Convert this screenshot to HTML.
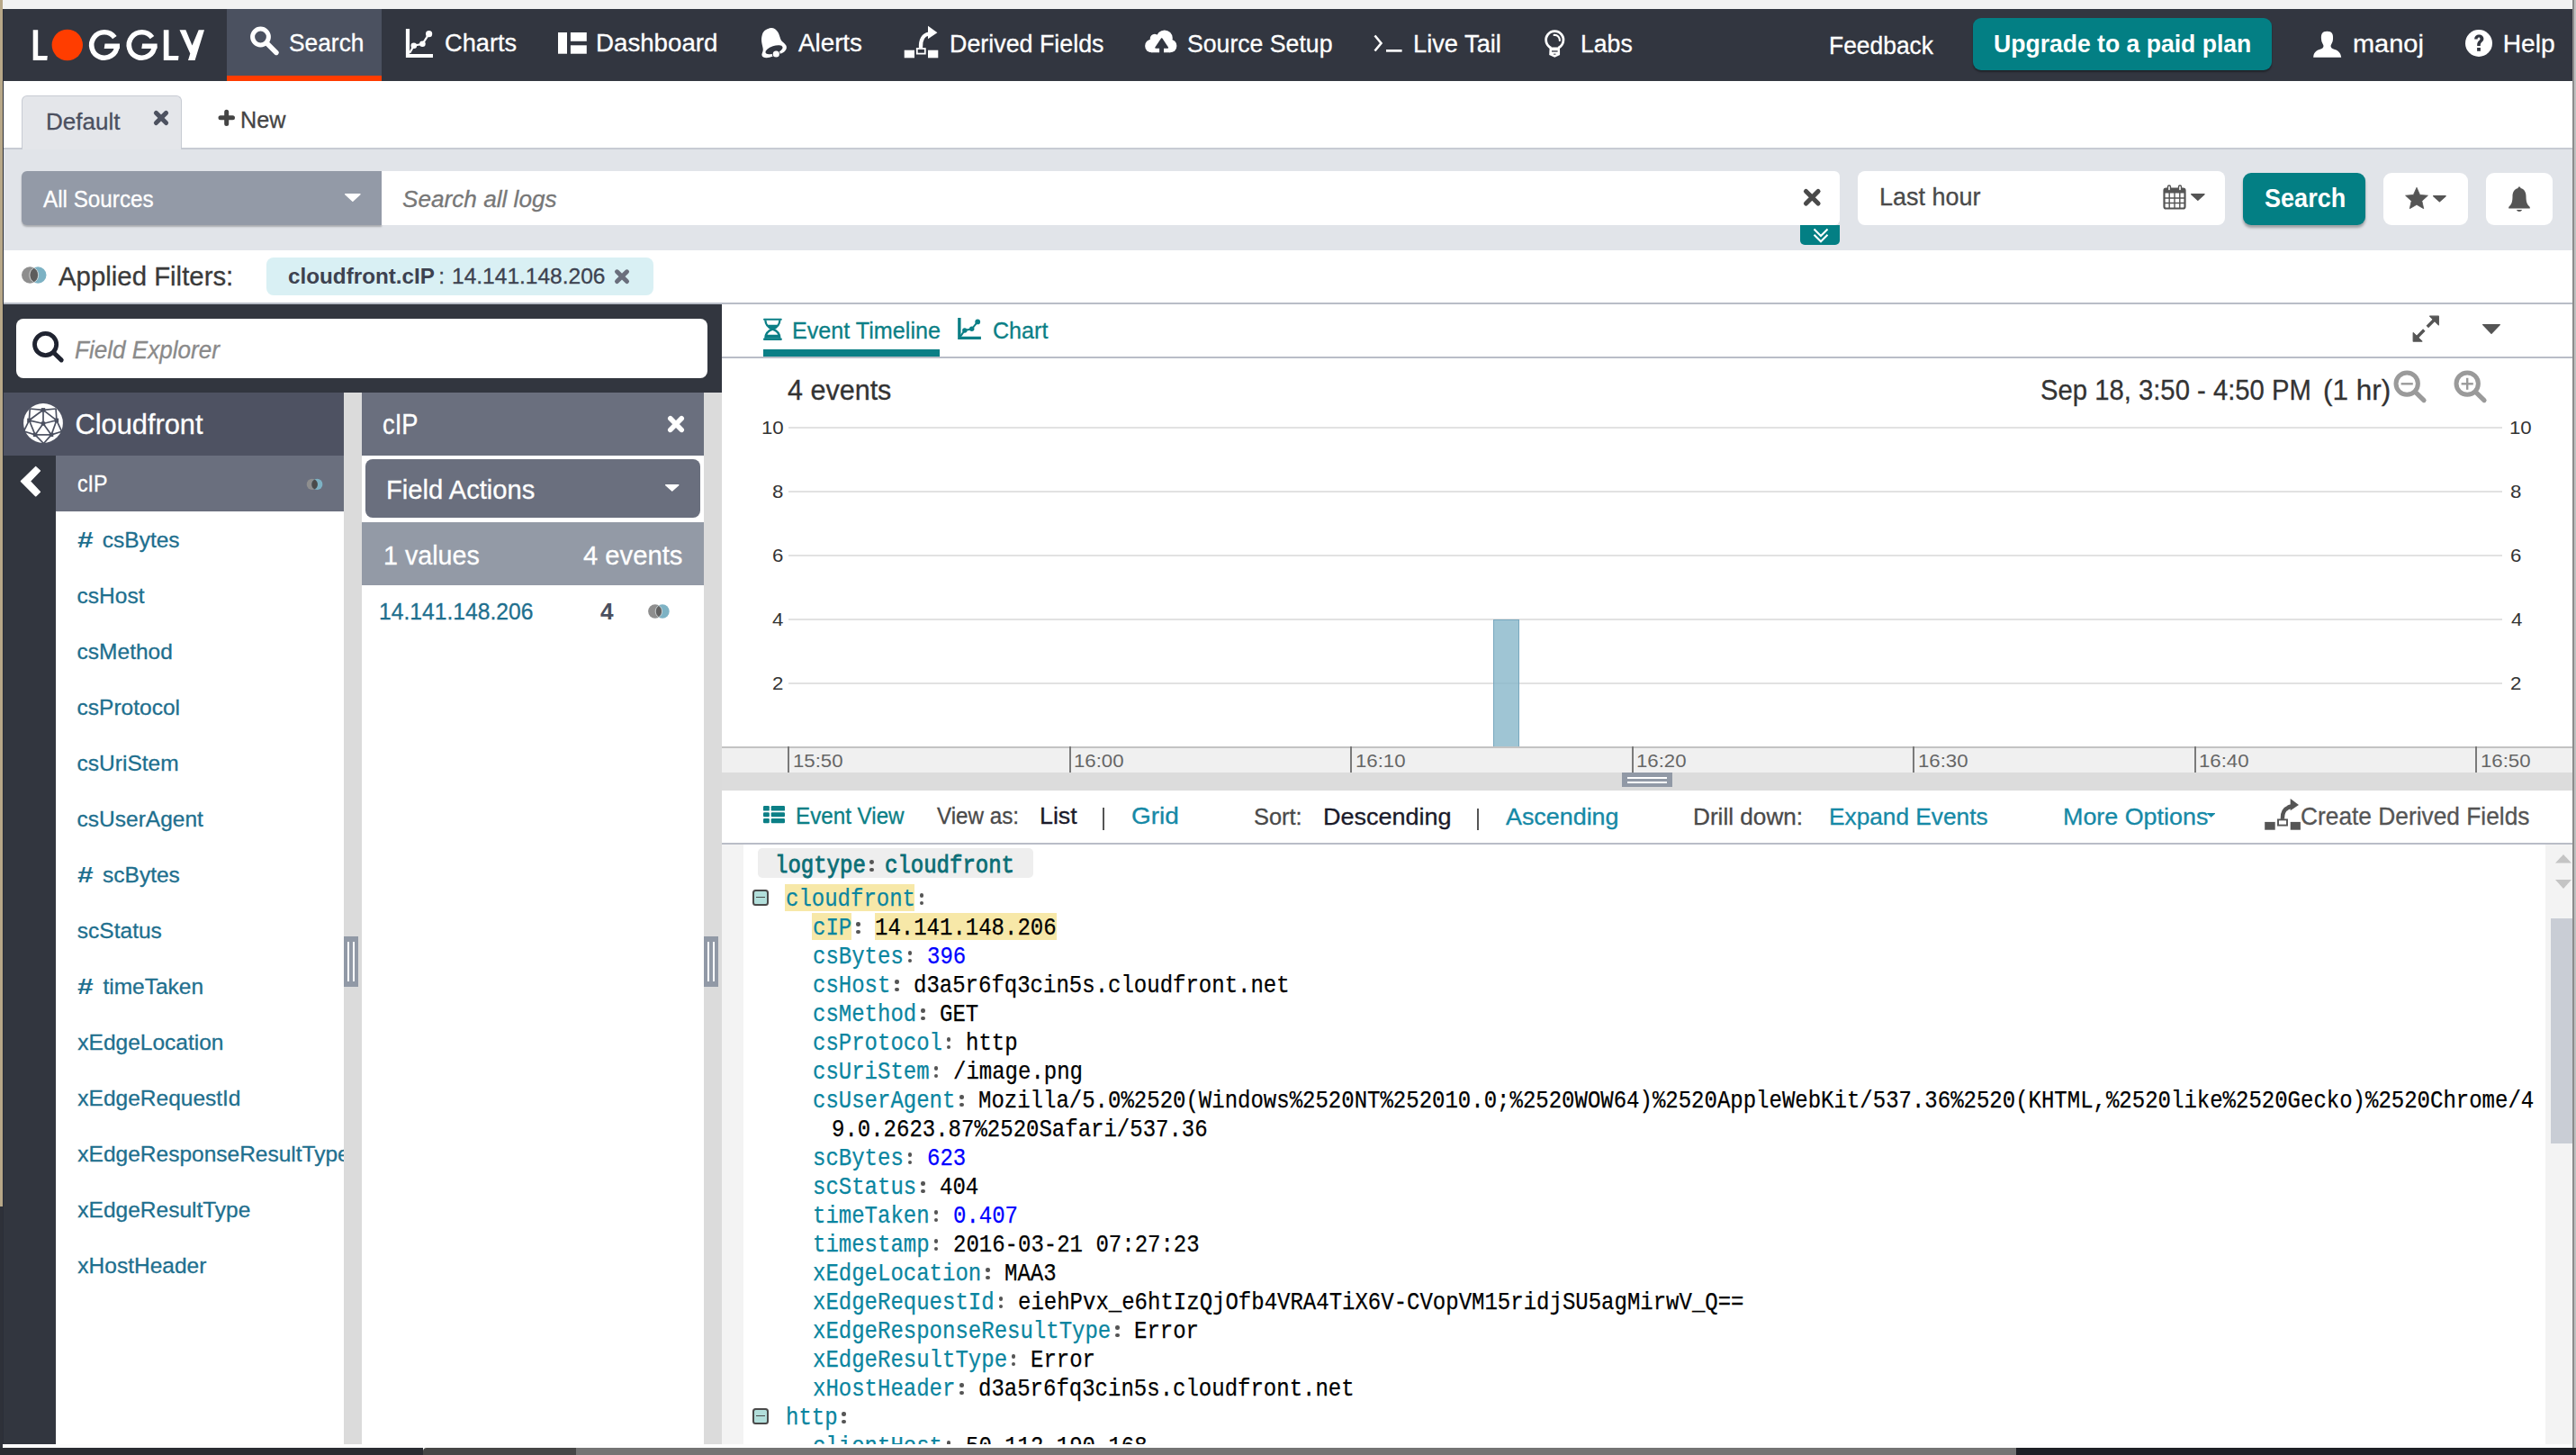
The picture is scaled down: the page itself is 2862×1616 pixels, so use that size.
<!DOCTYPE html><html><head><meta charset="utf-8"><title>Loggly</title><style>*{margin:0;padding:0;box-sizing:border-box}
html,body{width:2862px;height:1616px;overflow:hidden;background:#fff}
body{position:relative;font-family:'Liberation Sans',sans-serif}
div{position:absolute}
.t{white-space:pre;-webkit-text-stroke-width:0.3px}
</style></head><body>
<div style="left:0.00px;top:0.00px;width:2862.00px;height:1616.00px;background:#ffffff;"></div>
<div style="left:0.00px;top:0.00px;width:2862.00px;height:10.00px;background:#f2f2f2;"></div>
<div style="left:0.00px;top:10.00px;width:2858.00px;height:80.00px;background:#323640;"></div>
<div style="left:252.00px;top:10.00px;width:172.00px;height:80.00px;background:#4b5160;"></div>
<div style="left:252.00px;top:84.00px;width:172.00px;height:6.00px;background:#ff3c00;"></div>
<svg style="position:absolute;left:30px;top:25px;" width="210" height="50" viewBox="0 0 210 50"><g fill="#fff"><polygon points="6.7,8.2 12.2,8.2 12.2,37.1 22.8,37.1 22.3,42 6.7,42"/><circle cx="44.8" cy="25" r="17.2" fill="#ff3d00"/><polygon points="151.8,8.2 157.5,8.2 157.5,37.1 168.5,37.1 168,42 151.8,42"/><polygon points="169.5,8.2 176.4,8.2 183.5,25.5 190.7,8.2 197,8.2 186.6,42 179,42 181.3,34.5"/></g><path d="M 97.39 16.65 A 14.2 14.2 0 1 0 100.07 25.99" fill="none" stroke="#fff" stroke-width="5.6"/><polygon points="86.50,23.6 103.00,23.6 103.00,29 85.70,29" fill="#fff"/><path d="M 138.99 16.65 A 14.2 14.2 0 1 0 141.67 25.99" fill="none" stroke="#fff" stroke-width="5.6"/><polygon points="128.10,23.6 144.60,23.6 144.60,29 127.30,29" fill="#fff"/></svg>
<svg style="position:absolute;left:270px;top:24px;" width="46" height="46" viewBox="0 0 46 46"><circle cx="19.5" cy="17" r="8.9" fill="none" stroke="#fff" stroke-width="5"/><line x1="26.5" y1="24" x2="37" y2="34.5" stroke="#fff" stroke-width="5.4" stroke-linecap="round"/></svg>
<svg style="position:absolute;left:448px;top:28px;" width="40" height="40" viewBox="0 0 40 40"><path d="M5,4 V34 H33" fill="none" stroke="#fff" stroke-width="4.2"/><polyline points="7.2,30.7 11.8,22.7 21.4,20.8 28.6,9.7" fill="none" stroke="#fff" stroke-width="2.3"/><circle cx="11.8" cy="22.7" r="3.3" fill="#fff"/><circle cx="21.4" cy="20.8" r="3.3" fill="#fff"/><circle cx="28.6" cy="9.7" r="3.6" fill="#fff"/></svg>
<svg style="position:absolute;left:618px;top:34px;" width="40" height="30" viewBox="0 0 40 30"><rect x="2" y="2" width="10" height="23.7" fill="#fff"/><rect x="15.9" y="2" width="17.9" height="9.8" fill="#fff"/><rect x="15.9" y="16.3" width="17.9" height="9.4" fill="#fff"/></svg>
<svg style="position:absolute;left:840px;top:25px;" width="40" height="45" viewBox="0 0 40 45"><path d="M13.3,7.1 C 17,4.5 22,6.5 24.5,11 C 27,15.5 26.5,19 29.5,21.5 C 33,24.5 34.5,26 33.7,29 C 32.5,32.5 29,34 27.5,34.5 L 15,38.7 C 11,39.8 7,39 6.5,36.5 C 6,34 8.5,32.5 7.5,28 C 6.5,23 5,19 7,13 C 8.5,9 11,8 13.3,7.1 Z" fill="#fff"/><ellipse cx="20" cy="30.3" rx="10" ry="4.2" transform="rotate(-18 20 30.3)" fill="#323640"/><circle cx="22.3" cy="35" r="4.5" fill="#323640"/><circle cx="22.3" cy="35" r="3.6" fill="#fff"/></svg>
<svg style="position:absolute;left:1000px;top:25px;" width="48" height="44" viewBox="0 0 48 44"><rect x="4.7" y="30.7" width="11.3" height="8.6" fill="#fff"/><rect x="31" y="30.7" width="11.3" height="8.6" fill="#fff"/><rect x="18.8" y="29" width="9" height="5.6" fill="none" stroke="#fff" stroke-width="1.8"/><path d="M23,28 C 22.5,19 26,13.5 32,12.5" fill="none" stroke="#fff" stroke-width="4.2"/><polygon points="31,3.8 41.4,11.2 31,18.2" fill="#fff"/></svg>
<svg style="position:absolute;left:1268px;top:28px;" width="44" height="36" viewBox="0 0 44 36"><g fill="#fff"><circle cx="14.9" cy="14.9" r="5.2"/><circle cx="25.8" cy="14.4" r="9"/><circle cx="11.4" cy="23" r="7.3"/><circle cx="32.1" cy="23" r="7.3"/><rect x="11.4" y="15" width="20.7" height="15.3"/></g><polygon points="22.7,15 16,24.9 29.3,24.9" fill="#323640" stroke="#323640" stroke-width="1.6" stroke-linejoin="round"/><rect x="20.1" y="24" width="4.9" height="8" fill="#323640"/></svg>
<svg style="position:absolute;left:1522px;top:34px;" width="40" height="28" viewBox="0 0 40 28"><polyline points="5.5,5.5 12.5,14 5.5,22.5" fill="none" stroke="#fff" stroke-width="2.6"/><rect x="18" y="21" width="17.6" height="2.7" fill="#fff"/></svg>
<svg style="position:absolute;left:1710px;top:28px;" width="34" height="40" viewBox="0 0 34 40"><path d="M 13.4 25.2 A 9.66 9.66 0 1 1 21.2 25.2" fill="none" stroke="#fff" stroke-width="2.8"/><path d="M 16.6 10.9 A 5.6 5.6 0 0 1 22.9 17" fill="none" stroke="#fff" stroke-width="2.2" stroke-linecap="round"/><polygon points="11.6,24.5 23,24.5 23.1,32.9 17.3,35.8 11.2,32.9" fill="#fff"/><rect x="14" y="28.3" width="6.6" height="1.3" fill="#323640"/><rect x="16" y="31.7" width="2.6" height="0.9" fill="#323640"/></svg>
<div class="t" style="left:321.31px;top:30.50px;font-family:'Liberation Sans';font-size:28.20px;line-height:32px;color:#fff;transform:scaleX(0.9344);transform-origin:0 0;">Search</div>
<div class="t" style="left:493.64px;top:31.40px;font-family:'Liberation Sans';font-size:28.20px;line-height:32px;color:#fff;transform:scaleX(0.9659);transform-origin:0 0;">Charts</div>
<div class="t" style="left:662.38px;top:31.40px;font-family:'Liberation Sans';font-size:28.20px;line-height:32px;color:#fff;transform:scaleX(0.9820);transform-origin:0 0;">Dashboard</div>
<div class="t" style="left:887.20px;top:31.45px;font-family:'Liberation Sans';font-size:28.20px;line-height:32px;color:#fff;transform:scaleX(0.9850);transform-origin:0 0;">Alerts</div>
<div class="t" style="left:1054.65px;top:31.50px;font-family:'Liberation Sans';font-size:28.20px;line-height:32px;color:#fff;transform:scaleX(0.9522);transform-origin:0 0;">Derived Fields</div>
<div class="t" style="left:1319.00px;top:31.75px;font-family:'Liberation Sans';font-size:28.20px;line-height:32px;color:#fff;transform:scaleX(0.9454);transform-origin:0 0;">Source Setup</div>
<div class="t" style="left:1569.82px;top:31.75px;font-family:'Liberation Sans';font-size:28.20px;line-height:32px;color:#fff;transform:scaleX(0.9662);transform-origin:0 0;">Live Tail</div>
<div class="t" style="left:1755.77px;top:31.75px;font-family:'Liberation Sans';font-size:28.20px;line-height:32px;color:#fff;transform:scaleX(0.9439);transform-origin:0 0;">Labs</div>
<div class="t" style="left:2031.59px;top:33.80px;font-family:'Liberation Sans';font-size:28.20px;line-height:32px;color:#fff;transform:scaleX(0.9371);transform-origin:0 0;">Feedback</div>
<div class="t" style="left:2613.72px;top:32.10px;font-family:'Liberation Sans';font-size:28.20px;line-height:32px;color:#fff;transform:scaleX(1.0269);transform-origin:0 0;">manoj</div>
<div class="t" style="left:2780.75px;top:32.10px;font-family:'Liberation Sans';font-size:28.20px;line-height:32px;color:#fff;">Help</div>
<div style="left:2192.00px;top:20.00px;width:332.00px;height:58.00px;background:#037f84;border-radius:9px;box-shadow:0 2px 2px rgba(0,0,0,0.35);"></div>
<div class="t" style="left:2215.21px;top:33.00px;font-family:'Liberation Sans';font-size:27.80px;line-height:31px;color:#fff;font-weight:bold;-webkit-text-stroke-width:0;transform:scaleX(0.9556);transform-origin:0 0;">Upgrade to a paid plan</div>
<svg style="position:absolute;left:2566px;top:30px;" width="40" height="38" viewBox="0 0 40 38"><path d="M4.2,33.7 C 4.5,29 6.5,26.5 11,25 C 14,24 15.5,23 15.5,21 C 15.5,19.5 13,17 13,13.5 C 12.5,8 14,4.7 19.5,4.7 C 25,4.7 26.5,8 26,13.5 C 26,17 23.5,19.5 23.5,21 C 23.5,23 25,24 28,25 C 32.5,26.5 34.5,29 35.2,33.7 Z" fill="#fff"/></svg>
<svg style="position:absolute;left:2736px;top:30px;" width="36" height="36" viewBox="0 0 36 36"><circle cx="18" cy="18" r="15" fill="#fff"/><path d="M13.2,13.5 C 13.2,10.2 15.5,8.6 18.3,8.6 C 21.3,8.6 23.4,10.5 23.4,13 C 23.4,16.5 19.8,16.8 19.8,20 L 19.8,21 L 16.2,21 L 16.2,19.5 C 16.2,15.5 19.5,15 19.5,13.2 C 19.5,12.2 18.9,11.6 18.1,11.6 C 17.1,11.6 16.6,12.4 16.6,13.5 Z" fill="#323640"/><rect x="16.1" y="23" width="3.8" height="3.8" fill="#323640"/></svg>
<div style="left:0.00px;top:164.00px;width:2858.00px;height:2.00px;background:#c7cbd3;"></div>
<div style="left:24.00px;top:106.00px;width:178.00px;height:60.00px;background:#e4e6ea;border:1.6px solid #c7cbd3;border-bottom:none;border-radius:6px 6px 0 0;"></div>
<div class="t" style="left:51.42px;top:120.70px;font-family:'Liberation Sans';font-size:25.30px;line-height:28px;color:#4b5060;transform:scaleX(1.0292);transform-origin:0 0;">Default</div>
<svg style="position:absolute;left:166px;top:118px;" width="26" height="26" viewBox="0 0 26 26"><path d="M7.4,7.4 L18.6,18.5 M18.6,7.4 L7.4,18.5" stroke="#4d5260" stroke-width="5" stroke-linecap="round"/></svg>
<svg style="position:absolute;left:238px;top:117px;" width="28" height="28" viewBox="0 0 28 28"><path d="M13.7,7.3 V20.4 M7,13.85 H20.5" stroke="#444" stroke-width="5" stroke-linecap="round"/></svg>
<div class="t" style="left:266.98px;top:118.20px;font-family:'Liberation Sans';font-size:26.00px;line-height:30px;color:#444;transform:scaleX(0.9690);transform-origin:0 0;">New</div>
<div style="left:0.00px;top:166.00px;width:2858.00px;height:112.00px;background:#e1e4e9;"></div>
<div style="left:24.00px;top:190.00px;width:400.00px;height:60.00px;background:#939aa7;border-radius:6px 0 0 6px;box-shadow:0 2px 2px rgba(0,0,0,0.25);"></div>
<div class="t" style="left:47.80px;top:207.00px;font-family:'Liberation Sans';font-size:25.40px;line-height:28px;color:#fff;transform:scaleX(0.9551);transform-origin:0 0;">All Sources</div>
<svg style="position:absolute;left:380.20px;top:211.70px" width="23.70" height="14.85"><polygon points="3.70,3.70 20.00,3.70 11.85,11.15" fill="#fff" stroke="#fff" stroke-width="1.4" stroke-linejoin="round"/></svg>
<div style="left:424.00px;top:190.00px;width:1620.00px;height:60.00px;background:#fff;border-radius:0 6px 6px 0;"></div>
<div class="t" style="left:446.81px;top:206.00px;font-family:'Liberation Sans';font-size:26.70px;line-height:30px;color:#777;font-style:italic;transform:scaleX(0.9803);transform-origin:0 0;">Search all logs</div>
<svg style="position:absolute;left:2000px;top:206px;" width="28" height="26" viewBox="0 0 28 26"><path d="M6.5,6.5 L20,20 M20,6.5 L6.5,20" stroke="#4a4a4a" stroke-width="5.2" stroke-linecap="round"/></svg>
<div style="left:2000.00px;top:250.00px;width:44.00px;height:22.00px;background:#037f84;border-radius:0 0 5px 5px;"></div>
<svg style="position:absolute;left:2010px;top:250px;" width="26" height="22" viewBox="0 0 26 22"><polyline points="5.5,4.5 13,12 20.5,4.5" fill="none" stroke="#fff" stroke-width="2.1"/><polyline points="5.5,10.8 13,18.3 20.5,10.8" fill="none" stroke="#fff" stroke-width="2.1"/></svg>
<div style="left:2064.00px;top:190.00px;width:408.00px;height:60.00px;background:#fff;border-radius:8px;"></div>
<div class="t" style="left:2088.04px;top:203.10px;font-family:'Liberation Sans';font-size:27.80px;line-height:31px;color:#4a4a4a;transform:scaleX(0.9695);transform-origin:0 0;">Last hour</div>
<svg style="position:absolute;left:2400px;top:203px;" width="32" height="32" viewBox="0 0 32 32"><rect x="4.5" y="6.5" width="23" height="22" rx="2" fill="none" stroke="#555" stroke-width="2.2"/><rect x="4.5" y="6.5" width="23" height="5" fill="#555"/><path d="M4.5,17 H27.5 M4.5,22.5 H27.5 M10.2,11 V28.5 M16,11 V28.5 M21.8,11 V28.5" stroke="#555" stroke-width="1.4"/><rect x="8.5" y="3" width="3" height="6" rx="1.5" fill="#fff" stroke="#555" stroke-width="1.4"/><rect x="20.5" y="3" width="3" height="6" rx="1.5" fill="#fff" stroke="#555" stroke-width="1.4"/></svg>
<svg style="position:absolute;left:2430.70px;top:212.00px" width="21.70" height="13.85"><polygon points="3.70,3.70 18.00,3.70 10.85,10.15" fill="#555" stroke="#555" stroke-width="1.4" stroke-linejoin="round"/></svg>
<div style="left:2492.00px;top:192.00px;width:136.00px;height:58.00px;background:#037f84;border-radius:9px;box-shadow:0 3px 3px rgba(0,0,0,0.3);"></div>
<div class="t" style="left:2515.99px;top:204.10px;font-family:'Liberation Sans';font-size:28.60px;line-height:32px;color:#fff;font-weight:bold;-webkit-text-stroke-width:0;transform:scaleX(0.9460);transform-origin:0 0;">Search</div>
<div style="left:2648.00px;top:192.00px;width:94.00px;height:58.00px;background:#fff;border-radius:9px;"></div>
<svg style="position:absolute;left:2670px;top:206px;" width="30" height="28" viewBox="0 0 30 28"><polygon points="15,2.3 18.6,10.4 27.4,11.2 20.8,17.2 22.7,25.7 15,21.3 7.3,25.7 9.2,17.2 2.6,11.2 11.4,10.4" fill="#555" stroke="#555" stroke-width="0.8" stroke-linejoin="round"/></svg>
<svg style="position:absolute;left:2700.20px;top:214.00px" width="20.80" height="13.40"><polygon points="3.70,3.70 17.10,3.70 10.40,9.70" fill="#555" stroke="#555" stroke-width="1.4" stroke-linejoin="round"/></svg>
<div style="left:2762.00px;top:192.00px;width:74.00px;height:58.00px;background:#fff;border-radius:9px;"></div>
<svg style="position:absolute;left:2784px;top:204px;" width="30" height="34" viewBox="0 0 30 34"><path d="M15,3.4 C 16,3.4 16.5,4 16.5,5 C 21,6 22.5,10 22.5,14 C 22.5,20 23.5,23 26.8,26 L 26.8,27.5 L 3.2,27.5 L 3.2,26 C 6.5,23 7.5,20 7.5,14 C 7.5,10 9,6 13.5,5 C 13.5,4 14,3.4 15,3.4 Z" fill="#555"/><path d="M12,29 C 12.5,31.5 17.5,31.5 18,29 Z" fill="#555"/></svg>
<svg style="position:absolute;left:22px;top:294px;" width="32" height="24" viewBox="0 0 32 24"><circle cx="11.3" cy="11.5" r="9.3" fill="#8e8e8e"/><circle cx="20.2" cy="11.5" r="9.3" fill="#7db2c4"/><path d="M15.75,3.35 A 9.3 9.3 0 0 1 15.75 19.65 A 9.3 9.3 0 0 1 15.75 3.35 Z" fill="#5d5d5d" stroke="#fff" stroke-width="0.7"/></svg>
<div class="t" style="left:64.70px;top:290.90px;font-family:'Liberation Sans';font-size:29.00px;line-height:32px;color:#3a3a3a;transform:scaleX(1.0128);transform-origin:0 0;">Applied Filters:</div>
<div style="left:296.00px;top:286.00px;width:430.00px;height:41.50px;background:#d9f0f4;border-radius:8px;"></div>
<div class="t" style="left:320.33px;top:293.00px;font-family:'Liberation Sans';font-size:24.40px;line-height:27px;color:#3d4250;font-weight:bold;-webkit-text-stroke-width:0;transform:scaleX(0.9941);transform-origin:0 0;">cloudfront.cIP</div>
<div class="t" style="left:487.30px;top:293.00px;font-family:'Liberation Sans';font-size:24.40px;line-height:27px;color:#3d4250;">:</div>
<div class="t" style="left:501.66px;top:293.00px;font-family:'Liberation Sans';font-size:24.40px;line-height:27px;color:#3d4250;transform:scaleX(1.0056);transform-origin:0 0;">14.141.148.206</div>
<svg style="position:absolute;left:679px;top:295px;" width="24" height="24" viewBox="0 0 24 24"><path d="M6.5,6.8 L17.5,17.5 M17.5,6.8 L6.5,17.5" stroke="#6a6e7c" stroke-width="5" stroke-linecap="round"/></svg>
<div style="left:0.00px;top:336.00px;width:2858.00px;height:2.00px;background:#b9bdc7;"></div>
<div style="left:0.00px;top:338.00px;width:802.00px;height:1266.00px;background:#32363f;"></div>
<div style="left:18.00px;top:354.00px;width:768.00px;height:66.00px;background:#fff;border-radius:8px;"></div>
<svg style="position:absolute;left:30px;top:362px;" width="46" height="46" viewBox="0 0 46 46"><circle cx="20.6" cy="20.5" r="12.1" fill="none" stroke="#1f2330" stroke-width="4.8"/><line x1="30" y1="30" x2="38.2" y2="37.9" stroke="#1f2330" stroke-width="5" stroke-linecap="round"/></svg>
<div class="t" style="left:83.22px;top:373.30px;font-family:'Liberation Sans';font-size:28.00px;line-height:31px;color:#8a8a8a;font-style:italic;transform:scaleX(0.9319);transform-origin:0 0;">Field Explorer</div>
<div style="left:382.00px;top:436.00px;width:20.00px;height:1168.00px;background:#dbdbdb;"></div>
<div style="left:782.00px;top:436.00px;width:20.00px;height:1168.00px;background:#dbdbdb;"></div>
<div style="left:382.00px;top:1040.00px;width:16.00px;height:56.00px;background:#9199a6;"></div>
<div style="left:385.90px;top:1046.00px;width:2.20px;height:44.00px;background:#fff;"></div>
<div style="left:392.00px;top:1046.00px;width:2.20px;height:44.00px;background:#fff;"></div>
<div style="left:782.00px;top:1040.00px;width:16.00px;height:56.00px;background:#9199a6;"></div>
<div style="left:785.90px;top:1046.00px;width:2.20px;height:44.00px;background:#fff;"></div>
<div style="left:792.00px;top:1046.00px;width:2.20px;height:44.00px;background:#fff;"></div>
<div style="left:0.00px;top:436.00px;width:382.00px;height:70.00px;background:#4e5262;"></div>
<svg style="position:absolute;left:26px;top:448px;" width="44" height="44" viewBox="0 0 44 44"><circle cx="22" cy="22" r="21.9" fill="#fff"/><line x1="7.20" y1="6.00" x2="22.00" y2="7.30" stroke="#4b5060" stroke-width="1.7"/><line x1="22.00" y1="7.30" x2="36.10" y2="6.00" stroke="#4b5060" stroke-width="1.7"/><line x1="7.20" y1="6.00" x2="6.40" y2="18.80" stroke="#4b5060" stroke-width="1.7"/><line x1="36.10" y1="6.00" x2="36.90" y2="18.80" stroke="#4b5060" stroke-width="1.7"/><line x1="22.00" y1="7.30" x2="6.40" y2="18.80" stroke="#4b5060" stroke-width="1.7"/><line x1="22.00" y1="7.30" x2="36.90" y2="18.80" stroke="#4b5060" stroke-width="1.7"/><line x1="22.00" y1="7.30" x2="22.00" y2="22.50" stroke="#4b5060" stroke-width="1.7"/><line x1="6.40" y1="18.80" x2="22.00" y2="22.50" stroke="#4b5060" stroke-width="1.7"/><line x1="36.90" y1="18.80" x2="22.00" y2="22.50" stroke="#4b5060" stroke-width="1.7"/><line x1="6.40" y1="18.80" x2="13.00" y2="34.90" stroke="#4b5060" stroke-width="1.7"/><line x1="36.90" y1="18.80" x2="31.10" y2="34.90" stroke="#4b5060" stroke-width="1.7"/><line x1="22.00" y1="22.50" x2="13.00" y2="34.90" stroke="#4b5060" stroke-width="1.7"/><line x1="22.00" y1="22.50" x2="31.10" y2="34.90" stroke="#4b5060" stroke-width="1.7"/><line x1="13.00" y1="34.90" x2="31.10" y2="34.90" stroke="#4b5060" stroke-width="1.7"/><line x1="6.40" y1="18.80" x2="0.50" y2="31.00" stroke="#4b5060" stroke-width="1.7"/><line x1="36.90" y1="18.80" x2="42.50" y2="31.20" stroke="#4b5060" stroke-width="1.7"/><line x1="0.50" y1="31.00" x2="13.00" y2="34.90" stroke="#4b5060" stroke-width="1.7"/><line x1="42.50" y1="31.20" x2="31.10" y2="34.90" stroke="#4b5060" stroke-width="1.7"/><line x1="13.00" y1="34.90" x2="22.50" y2="44.50" stroke="#4b5060" stroke-width="1.7"/><line x1="31.10" y1="34.90" x2="22.50" y2="44.50" stroke="#4b5060" stroke-width="1.7"/><rect x="19.80" y="5.10" width="4.4" height="4.4" fill="#4b5060"/><rect x="4.20" y="16.60" width="4.4" height="4.4" fill="#4b5060"/><rect x="34.70" y="16.60" width="4.4" height="4.4" fill="#4b5060"/><rect x="19.80" y="20.30" width="4.4" height="4.4" fill="#4b5060"/><rect x="10.80" y="32.70" width="4.4" height="4.4" fill="#4b5060"/><rect x="28.90" y="32.70" width="4.4" height="4.4" fill="#4b5060"/></svg>
<div class="t" style="left:83.46px;top:454.00px;font-family:'Liberation Sans';font-size:30.80px;line-height:35px;color:#fff;">Cloudfront</div>
<div style="left:62.00px;top:506.00px;width:320.00px;height:62.00px;background:#6a6f7e;"></div>
<svg style="position:absolute;left:14px;top:510px;" width="34" height="48" viewBox="0 0 34 48"><polygon points="9.3,24.5 25.7,8.4 30.6,12.9 19.4,24.5 30.6,36.3 25.7,41" fill="#fff" stroke="#fff" stroke-width="1.1" stroke-linejoin="round"/></svg>
<div class="t" style="left:85.67px;top:522.00px;font-family:'Liberation Sans';font-size:26.50px;line-height:30px;color:#fff;transform:scaleX(0.8773);transform-origin:0 0;">cIP</div>
<svg style="position:absolute;left:336px;top:528px;" width="26" height="20" viewBox="0 0 26 20"><circle cx="10.8" cy="9.9" r="6.1" fill="#8e8e8e"/><circle cx="16.3" cy="9.9" r="6.1" fill="#7db2c4"/><path d="M13.55,4.45 A 6.1 6.1 0 0 1 13.55 15.35 A 6.1 6.1 0 0 1 13.55 4.45 Z" fill="#4a4a4a"/></svg>
<div style="left:62.00px;top:568.00px;width:320.00px;height:1036.00px;background:#fff;"></div>
<div style="left:62px;top:568px;width:320px;height:1036px;overflow:hidden">
<div class="t" style="left:24.12px;top:17.60px;font-family:'Liberation Sans';font-size:24.30px;line-height:27px;color:#1e6f8e;font-weight:bold;-webkit-text-stroke-width:0;transform:scaleX(1.3090);transform-origin:0 0;">#</div>
<div class="t" style="left:51.82px;top:17.60px;font-family:'Liberation Sans';font-size:24.50px;line-height:27px;color:#1e6f8e;">csBytes</div>
<div class="t" style="left:23.62px;top:79.60px;font-family:'Liberation Sans';font-size:24.50px;line-height:27px;color:#1e6f8e;">csHost</div>
<div class="t" style="left:23.62px;top:141.60px;font-family:'Liberation Sans';font-size:24.50px;line-height:27px;color:#1e6f8e;">csMethod</div>
<div class="t" style="left:23.62px;top:203.60px;font-family:'Liberation Sans';font-size:24.50px;line-height:27px;color:#1e6f8e;">csProtocol</div>
<div class="t" style="left:23.62px;top:265.60px;font-family:'Liberation Sans';font-size:24.50px;line-height:27px;color:#1e6f8e;">csUriStem</div>
<div class="t" style="left:23.62px;top:327.60px;font-family:'Liberation Sans';font-size:24.50px;line-height:27px;color:#1e6f8e;">csUserAgent</div>
<div class="t" style="left:24.12px;top:389.60px;font-family:'Liberation Sans';font-size:24.30px;line-height:27px;color:#1e6f8e;font-weight:bold;-webkit-text-stroke-width:0;transform:scaleX(1.3090);transform-origin:0 0;">#</div>
<div class="t" style="left:52.06px;top:389.60px;font-family:'Liberation Sans';font-size:24.50px;line-height:27px;color:#1e6f8e;">scBytes</div>
<div class="t" style="left:23.86px;top:451.60px;font-family:'Liberation Sans';font-size:24.50px;line-height:27px;color:#1e6f8e;">scStatus</div>
<div class="t" style="left:24.12px;top:513.60px;font-family:'Liberation Sans';font-size:24.30px;line-height:27px;color:#1e6f8e;font-weight:bold;-webkit-text-stroke-width:0;transform:scaleX(1.3090);transform-origin:0 0;">#</div>
<div class="t" style="left:52.43px;top:513.60px;font-family:'Liberation Sans';font-size:24.50px;line-height:27px;color:#1e6f8e;">timeTaken</div>
<div class="t" style="left:24.35px;top:575.60px;font-family:'Liberation Sans';font-size:24.50px;line-height:27px;color:#1e6f8e;">xEdgeLocation</div>
<div class="t" style="left:24.35px;top:637.60px;font-family:'Liberation Sans';font-size:24.50px;line-height:27px;color:#1e6f8e;">xEdgeRequestId</div>
<div class="t" style="left:24.35px;top:699.60px;font-family:'Liberation Sans';font-size:24.50px;line-height:27px;color:#1e6f8e;">xEdgeResponseResultType</div>
<div class="t" style="left:24.35px;top:761.60px;font-family:'Liberation Sans';font-size:24.50px;line-height:27px;color:#1e6f8e;">xEdgeResultType</div>
<div class="t" style="left:24.35px;top:823.60px;font-family:'Liberation Sans';font-size:24.50px;line-height:27px;color:#1e6f8e;">xHostHeader</div>
</div>
<div style="left:402.00px;top:436.00px;width:380.00px;height:70.00px;background:#6a6f7e;"></div>
<div class="t" style="left:424.91px;top:454.00px;font-family:'Liberation Sans';font-size:30.50px;line-height:34px;color:#fff;transform:scaleX(0.8953);transform-origin:0 0;">cIP</div>
<svg style="position:absolute;left:736px;top:456px;" width="30" height="30" viewBox="0 0 30 30"><path d="M8.8,8.8 L21.2,21.4 M21.2,8.8 L8.8,21.4" stroke="#fff" stroke-width="5.6" stroke-linecap="round"/></svg>
<div style="left:402.00px;top:506.00px;width:380.00px;height:1098.00px;background:#fff;"></div>
<div style="left:406.00px;top:510.00px;width:372.00px;height:65.00px;background:#6a6f7e;border-radius:8px;"></div>
<div class="t" style="left:428.67px;top:527.60px;font-family:'Liberation Sans';font-size:29.00px;line-height:32px;color:#fff;transform:scaleX(1.0056);transform-origin:0 0;">Field Actions</div>
<svg style="position:absolute;left:735.50px;top:534.50px" width="21.50" height="13.75"><polygon points="3.70,3.70 17.80,3.70 10.75,10.05" fill="#fff" stroke="#fff" stroke-width="1.4" stroke-linejoin="round"/></svg>
<div style="left:402.00px;top:580.00px;width:380.00px;height:70.00px;background:#939aa6;"></div>
<div class="t" style="left:425.85px;top:599.60px;font-family:'Liberation Sans';font-size:30.00px;line-height:33px;color:#fff;transform:scaleX(0.9562);transform-origin:0 0;">1 values</div>
<div class="t" style="left:648.42px;top:599.60px;font-family:'Liberation Sans';font-size:30.00px;line-height:33px;color:#fff;transform:scaleX(0.9736);transform-origin:0 0;">4 events</div>
<div class="t" style="left:421.15px;top:663.80px;font-family:'Liberation Sans';font-size:26.00px;line-height:30px;color:#1e6f8e;transform:scaleX(0.9487);transform-origin:0 0;">14.141.148.206</div>
<div class="t" style="left:667.31px;top:663.80px;font-family:'Liberation Sans';font-size:26.00px;line-height:30px;color:#4b5060;font-weight:bold;-webkit-text-stroke-width:0;transform:scaleX(1.0065);transform-origin:0 0;">4</div>
<svg style="position:absolute;left:716px;top:668px;" width="32" height="24" viewBox="0 0 32 24"><circle cx="11.8" cy="11" r="7.7" fill="#8e8e8e"/><circle cx="20" cy="11" r="7.7" fill="#7db2c4"/><path d="M15.9,4.45 A 7.7 7.7 0 0 1 15.9 17.55 A 7.7 7.7 0 0 1 15.9 4.45 Z" fill="#616161" stroke="#fff" stroke-width="0.6"/></svg>
<div style="left:802.00px;top:338.00px;width:2056.00px;height:58.00px;background:#fff;"></div>
<svg style="position:absolute;left:846px;top:352px;" width="24" height="28" viewBox="0 0 24 28"><rect x="2" y="1.7" width="20.8" height="2.1" rx="1" fill="#0b7f86"/><rect x="2" y="23.6" width="20.8" height="2.3" rx="1" fill="#0b7f86"/><path d="M4.3,3.5 C4.6,9 8,12.2 12.4,13.7 C16.8,12.2 20.1,9 20.4,3.5 M4.3,23.8 C4.3,18.5 7.8,15.3 12.4,13.7 C17,15.3 20.4,18.5 20.4,23.8" fill="none" stroke="#0b7f86" stroke-width="2.3"/><path d="M6.4,8.8 L18.3,8.8 C17,11.2 15,12.8 12.4,13.7 C9.8,12.8 7.7,11.2 6.4,8.8 Z" fill="#0b7f86"/><path d="M5,19.8 L19.7,19.8 C20.2,21 20.4,22.4 20.4,23.8 L4.3,23.8 C4.3,22.4 4.5,21 5,19.8 Z" fill="#0b7f86"/></svg>
<div class="t" style="left:879.99px;top:353.00px;font-family:'Liberation Sans';font-size:25.90px;line-height:28px;color:#0b7f86;transform:scaleX(0.9714);transform-origin:0 0;">Event Timeline</div>
<div style="left:848.00px;top:388.00px;width:196.00px;height:8.00px;background:#0b7f86;"></div>
<svg style="position:absolute;left:1062px;top:350px;" width="32" height="30" viewBox="0 0 32 30"><path d="M3.85,3 V25.4 H27.9" fill="none" stroke="#0b7f86" stroke-width="3.4"/><polyline points="5.1,23.6 9.8,17 17.7,15.3 24.2,7.4" fill="none" stroke="#0b7f86" stroke-width="2"/><circle cx="9.8" cy="17" r="2.7" fill="#0b7f86"/><circle cx="17.7" cy="15.3" r="2.7" fill="#0b7f86"/><circle cx="24.2" cy="7.4" r="2.9" fill="#0b7f86"/></svg>
<div class="t" style="left:1103.44px;top:353.00px;font-family:'Liberation Sans';font-size:25.90px;line-height:28px;color:#0b7f86;transform:scaleX(0.9693);transform-origin:0 0;">Chart</div>
<svg style="position:absolute;left:2676px;top:346px;" width="38" height="38" viewBox="0 0 38 38"><path d="M20.8,17 L29.5,8.3 M17.3,20.6 L8.5,29.4" stroke="#555" stroke-width="3.5"/><polygon points="23.6,5.2 33.3,5.2 33.3,14.9" fill="#555" stroke="#555" stroke-width="1.2" stroke-linejoin="round"/><polygon points="5.2,23.6 5.2,33.1 14.9,33.1" fill="#555" stroke="#555" stroke-width="1.2" stroke-linejoin="round"/></svg>
<svg style="position:absolute;left:2752px;top:354px;" width="32" height="24" viewBox="0 0 32 24"><polygon points="6.7,6.6 25.3,6.6 16,16.3" fill="#555" stroke="#555" stroke-width="1.4" stroke-linejoin="round"/></svg>
<div style="left:802.00px;top:396.00px;width:2056.00px;height:2.00px;background:#b9bdc7;"></div>
<div class="t" style="left:875.09px;top:416.00px;font-family:'Liberation Sans';font-size:30.80px;line-height:35px;color:#333;transform:scaleX(0.9910);transform-origin:0 0;">4 events</div>
<div class="t" style="left:2267.08px;top:416.00px;font-family:'Liberation Sans';font-size:31.30px;line-height:35px;color:#333;transform:scaleX(0.9347);transform-origin:0 0;">Sep 18, 3:50 - 4:50 PM</div>
<div class="t" style="left:2581.41px;top:416.00px;font-family:'Liberation Sans';font-size:31.30px;line-height:35px;color:#333;transform:scaleX(1.0057);transform-origin:0 0;">(1 hr)</div>
<svg style="position:absolute;left:2659px;top:410px;" width="40" height="40" viewBox="0 0 40 40"><circle cx="15.2" cy="16.1" r="12.2" fill="none" stroke="#9a9a9a" stroke-width="5"/><line x1="24.5" y1="25.3" x2="34" y2="34.6" stroke="#9a9a9a" stroke-width="5.2" stroke-linecap="round"/><line x1="8.6" y1="16.3" x2="21.8" y2="16.3" stroke="#9a9a9a" stroke-width="2.4"/></svg>
<svg style="position:absolute;left:2726px;top:410px;" width="40" height="40" viewBox="0 0 40 40"><circle cx="15.2" cy="16.1" r="12.2" fill="none" stroke="#9a9a9a" stroke-width="5"/><line x1="24.5" y1="25.3" x2="34" y2="34.6" stroke="#9a9a9a" stroke-width="5.2" stroke-linecap="round"/><line x1="8.6" y1="16.3" x2="21.8" y2="16.3" stroke="#9a9a9a" stroke-width="2.4"/><line x1="15.2" y1="9.8" x2="15.2" y2="22.8" stroke="#9a9a9a" stroke-width="2.4"/></svg>
<div style="left:876.00px;top:474.00px;width:1904.00px;height:1.60px;background:#e2e2e2;"></div>
<div class="t" style="left:845.58px;top:462.90px;font-family:'Liberation Sans';font-size:20.60px;line-height:23px;color:#333;transform:scaleX(1.0800);transform-origin:0 0;-webkit-text-stroke-width:0;">10</div>
<div class="t" style="left:2788.33px;top:462.90px;font-family:'Liberation Sans';font-size:20.60px;line-height:23px;color:#333;transform:scaleX(1.0800);transform-origin:0 0;-webkit-text-stroke-width:0;">10</div>
<div style="left:876.00px;top:545.00px;width:1904.00px;height:1.60px;background:#e2e2e2;"></div>
<div class="t" style="left:858.04px;top:533.90px;font-family:'Liberation Sans';font-size:20.60px;line-height:23px;color:#333;transform:scaleX(1.0800);transform-origin:0 0;-webkit-text-stroke-width:0;">8</div>
<div class="t" style="left:2789.00px;top:533.90px;font-family:'Liberation Sans';font-size:20.60px;line-height:23px;color:#333;transform:scaleX(1.0800);transform-origin:0 0;-webkit-text-stroke-width:0;">8</div>
<div style="left:876.00px;top:616.00px;width:1904.00px;height:1.60px;background:#e2e2e2;"></div>
<div class="t" style="left:858.04px;top:604.90px;font-family:'Liberation Sans';font-size:20.60px;line-height:23px;color:#333;transform:scaleX(1.0800);transform-origin:0 0;-webkit-text-stroke-width:0;">6</div>
<div class="t" style="left:2788.89px;top:604.90px;font-family:'Liberation Sans';font-size:20.60px;line-height:23px;color:#333;transform:scaleX(1.0800);transform-origin:0 0;-webkit-text-stroke-width:0;">6</div>
<div style="left:876.00px;top:687.00px;width:1904.00px;height:1.60px;background:#e2e2e2;"></div>
<div class="t" style="left:857.82px;top:675.90px;font-family:'Liberation Sans';font-size:20.60px;line-height:23px;color:#333;transform:scaleX(1.0800);transform-origin:0 0;-webkit-text-stroke-width:0;">4</div>
<div class="t" style="left:2789.56px;top:675.90px;font-family:'Liberation Sans';font-size:20.60px;line-height:23px;color:#333;transform:scaleX(1.0800);transform-origin:0 0;-webkit-text-stroke-width:0;">4</div>
<div style="left:876.00px;top:758.00px;width:1904.00px;height:1.60px;background:#e2e2e2;"></div>
<div class="t" style="left:858.26px;top:746.90px;font-family:'Liberation Sans';font-size:20.60px;line-height:23px;color:#333;transform:scaleX(1.0800);transform-origin:0 0;-webkit-text-stroke-width:0;">2</div>
<div class="t" style="left:2788.89px;top:746.90px;font-family:'Liberation Sans';font-size:20.60px;line-height:23px;color:#333;transform:scaleX(1.0800);transform-origin:0 0;-webkit-text-stroke-width:0;">2</div>
<div style="left:1659.00px;top:688.00px;width:29.00px;height:142.00px;background:rgba(140,185,203,0.83);border:1px solid rgba(110,160,185,0.8);border-bottom:none;"></div>
<div style="left:802.00px;top:829.00px;width:2056.00px;height:2.00px;background:#c3c3c3;"></div>
<div style="left:802.00px;top:831.00px;width:2056.00px;height:27.00px;background:#f0f0f0;"></div>
<div style="left:875.00px;top:829.00px;width:2.00px;height:29.00px;background:#7a7a7a;"></div>
<div class="t" style="left:880.83px;top:834.70px;font-family:'Liberation Sans';font-size:19.30px;line-height:21px;color:#666;transform:scaleX(1.1512);transform-origin:0 0;-webkit-text-stroke-width:0;">15:50</div>
<div style="left:1187.50px;top:829.00px;width:2.00px;height:29.00px;background:#7a7a7a;"></div>
<div class="t" style="left:1193.33px;top:834.70px;font-family:'Liberation Sans';font-size:19.30px;line-height:21px;color:#666;transform:scaleX(1.1512);transform-origin:0 0;-webkit-text-stroke-width:0;">16:00</div>
<div style="left:1500.00px;top:829.00px;width:2.00px;height:29.00px;background:#7a7a7a;"></div>
<div class="t" style="left:1505.83px;top:834.70px;font-family:'Liberation Sans';font-size:19.30px;line-height:21px;color:#666;transform:scaleX(1.1512);transform-origin:0 0;-webkit-text-stroke-width:0;">16:10</div>
<div style="left:1812.50px;top:829.00px;width:2.00px;height:29.00px;background:#7a7a7a;"></div>
<div class="t" style="left:1818.33px;top:834.70px;font-family:'Liberation Sans';font-size:19.30px;line-height:21px;color:#666;transform:scaleX(1.1512);transform-origin:0 0;-webkit-text-stroke-width:0;">16:20</div>
<div style="left:2125.00px;top:829.00px;width:2.00px;height:29.00px;background:#7a7a7a;"></div>
<div class="t" style="left:2130.83px;top:834.70px;font-family:'Liberation Sans';font-size:19.30px;line-height:21px;color:#666;transform:scaleX(1.1512);transform-origin:0 0;-webkit-text-stroke-width:0;">16:30</div>
<div style="left:2437.50px;top:829.00px;width:2.00px;height:29.00px;background:#7a7a7a;"></div>
<div class="t" style="left:2443.33px;top:834.70px;font-family:'Liberation Sans';font-size:19.30px;line-height:21px;color:#666;transform:scaleX(1.1512);transform-origin:0 0;-webkit-text-stroke-width:0;">16:40</div>
<div style="left:2750.00px;top:829.00px;width:2.00px;height:29.00px;background:#7a7a7a;"></div>
<div class="t" style="left:2755.83px;top:834.70px;font-family:'Liberation Sans';font-size:19.30px;line-height:21px;color:#666;transform:scaleX(1.1512);transform-origin:0 0;-webkit-text-stroke-width:0;">16:50</div>
<div style="left:802.00px;top:858.00px;width:2056.00px;height:20.00px;background:#dcdcdc;"></div>
<div style="left:1802.00px;top:858.00px;width:56.00px;height:16.00px;background:#9199a6;"></div>
<div style="left:1808.00px;top:862.50px;width:44.00px;height:2.00px;background:#fff;"></div>
<div style="left:1808.00px;top:867.50px;width:44.00px;height:2.00px;background:#fff;"></div>
<div style="left:802.00px;top:878.00px;width:2056.00px;height:58.00px;background:#fff;"></div>
<svg style="position:absolute;left:846px;top:894px;" width="28" height="22" viewBox="0 0 28 22"><rect x="2" y="1" width="6.8" height="5.6" rx="1.2" fill="#0b7f86"/><rect x="10.7" y="1" width="15.3" height="5.6" rx="1.2" fill="#0b7f86"/><rect x="2" y="8.2" width="6.8" height="5.1" rx="1.2" fill="#0b7f86"/><rect x="10.7" y="8.2" width="15.3" height="5.1" rx="1.2" fill="#0b7f86"/><rect x="2" y="15" width="6.8" height="5.3" rx="1.2" fill="#0b7f86"/><rect x="10.7" y="15" width="15.3" height="5.3" rx="1.2" fill="#0b7f86"/></svg>
<div class="t" style="left:883.66px;top:892.40px;font-family:'Liberation Sans';font-size:24.90px;line-height:28px;color:#0b7f86;transform:scaleX(0.9719);transform-origin:0 0;">Event View</div>
<div class="t" style="left:1040.78px;top:892.40px;font-family:'Liberation Sans';font-size:24.90px;line-height:28px;color:#4a4a4a;transform:scaleX(0.9731);transform-origin:0 0;">View as:</div>
<div class="t" style="left:1154.66px;top:892.40px;font-family:'Liberation Sans';font-size:24.90px;line-height:28px;color:#1a1a2a;transform:scaleX(1.0764);transform-origin:0 0;">List</div>
<div style="left:1225.30px;top:897.00px;width:2.00px;height:24.50px;background:#555;"></div>
<div class="t" style="left:1256.90px;top:892.40px;font-family:'Liberation Sans';font-size:24.90px;line-height:28px;color:#1689a6;transform:scaleX(1.1245);transform-origin:0 0;">Grid</div>
<div class="t" style="left:1393.36px;top:893.20px;font-family:'Liberation Sans';font-size:24.90px;line-height:28px;color:#4a4a4a;transform:scaleX(1.0188);transform-origin:0 0;">Sort:</div>
<div class="t" style="left:1470.04px;top:893.20px;font-family:'Liberation Sans';font-size:24.90px;line-height:28px;color:#1a1a2a;transform:scaleX(1.0848);transform-origin:0 0;">Descending</div>
<div style="left:1640.80px;top:897.50px;width:2.00px;height:24.50px;background:#555;"></div>
<div class="t" style="left:1672.90px;top:893.20px;font-family:'Liberation Sans';font-size:24.90px;line-height:28px;color:#1689a6;transform:scaleX(1.0797);transform-origin:0 0;">Ascending</div>
<div class="t" style="left:1880.71px;top:893.10px;font-family:'Liberation Sans';font-size:24.90px;line-height:28px;color:#4a4a4a;transform:scaleX(1.0507);transform-origin:0 0;">Drill down:</div>
<div class="t" style="left:2032.10px;top:893.10px;font-family:'Liberation Sans';font-size:24.90px;line-height:28px;color:#1689a6;transform:scaleX(1.0547);transform-origin:0 0;">Expand Events</div>
<div class="t" style="left:2291.85px;top:893.10px;font-family:'Liberation Sans';font-size:24.90px;line-height:28px;color:#1689a6;transform:scaleX(1.0800);transform-origin:0 0;">More Options</div>
<svg style="position:absolute;left:2449.00px;top:899.80px" width="15.40" height="10.70"><polygon points="3.50,3.50 11.90,3.50 7.70,7.20" fill="#1689a6" stroke="#1689a6" stroke-width="1" stroke-linejoin="round"/></svg>
<svg style="position:absolute;left:2512px;top:884px;" width="48" height="42" viewBox="0 0 48 42"><rect x="4.2" y="28.9" width="11.5" height="8.8" fill="#555"/><rect x="32.7" y="28.9" width="11.2" height="8.8" fill="#555"/><rect x="19" y="26.4" width="10" height="6.2" fill="none" stroke="#555" stroke-width="1.9"/><path d="M24,25.8 C 23.5,18 27,13 34,11.5" fill="none" stroke="#555" stroke-width="4.4"/><polygon points="32.7,3 42,9.9 32.7,16.2" fill="#555"/></svg>
<div class="t" style="left:2556.28px;top:890.70px;font-family:'Liberation Sans';font-size:27.60px;line-height:31px;color:#555;transform:scaleX(0.9537);transform-origin:0 0;">Create Derived Fields</div>
<div style="left:802.00px;top:936.00px;width:2056.00px;height:2.00px;background:#b9bdc7;"></div>
<div style="left:802.00px;top:938.00px;width:2026.00px;height:666.00px;background:#fff;"></div>
<div style="left:802.00px;top:938.00px;width:24.00px;height:666.00px;background:#f3f3f3;"></div>
<div style="left:826px;top:937px;width:2002px;height:667px;overflow:hidden">
<div style="left:16.00px;top:5.00px;width:306.00px;height:33.40px;background:#eeeeee;border-radius:5px;"></div>
<div class="t" style="left:34.50px;top:8.50px;font-family:'Liberation Mono';font-size:27.5px;line-height:31px;color:#0b6e76;-webkit-text-stroke:0.85px #0b6e76;transform:scaleX(0.8727);transform-origin:0 0">logtype</div>
<div style="left:140.40px;top:17.90px;width:4.80px;height:4.80px;background:#555;border-radius:50%;"></div>
<div style="left:140.40px;top:26.70px;width:4.80px;height:4.80px;background:#555;border-radius:50%;"></div>
<div class="t" style="left:157.20px;top:8.50px;font-family:'Liberation Mono';font-size:27.5px;line-height:31px;color:#0b6e76;-webkit-text-stroke:0.85px #0b6e76;transform:scaleX(0.8727);transform-origin:0 0">cloudfront</div>
<div style="left:10.00px;top:50.50px;width:18.00px;height:18.50px;background:#b2dfdb;border:2px solid #4a4a4a;border-radius:3.5px;"></div>
<div style="left:13.80px;top:58.70px;width:10.40px;height:1.80px;background:#4a4a4a;"></div>
<div style="left:46.00px;top:45.00px;width:144.00px;height:30.00px;background:#f7e8a8;"></div>
<div class="t" style="left:46.50px;top:45.60px;font-family:'Liberation Mono';font-size:27.5px;line-height:31px;color:#0a85a0;-webkit-text-stroke:0.25px #0a85a0;transform:scaleX(0.8727);transform-origin:0 0">cloudfront</div>
<div style="left:195.75px;top:55.15px;width:4.50px;height:4.50px;background:#555;border-radius:50%;"></div>
<div style="left:195.75px;top:63.95px;width:4.50px;height:4.50px;background:#555;border-radius:50%;"></div>
<div style="left:76.00px;top:77.00px;width:44.00px;height:30.00px;background:#f7e8a8;"></div>
<div style="left:146.00px;top:77.00px;width:202.00px;height:30.00px;background:#f7e8a8;"></div>
<div class="t" style="left:76.70px;top:77.60px;font-family:'Liberation Mono';font-size:27.5px;line-height:31px;color:#0a85a0;-webkit-text-stroke:0.25px #0a85a0;transform:scaleX(0.8727);transform-origin:0 0">cIP</div>
<div style="left:125.15px;top:87.15px;width:4.50px;height:4.50px;background:#555;border-radius:50%;"></div>
<div style="left:125.15px;top:95.95px;width:4.50px;height:4.50px;background:#555;border-radius:50%;"></div>
<div class="t" style="left:146.20px;top:77.60px;font-family:'Liberation Mono';font-size:27.5px;line-height:31px;color:#000;-webkit-text-stroke:0.25px #000;transform:scaleX(0.8727);transform-origin:0 0">14.141.148.206</div>
<div class="t" style="left:76.70px;top:109.60px;font-family:'Liberation Mono';font-size:27.5px;line-height:31px;color:#0a85a0;-webkit-text-stroke:0.25px #0a85a0;transform:scaleX(0.8727);transform-origin:0 0">csBytes</div>
<div style="left:182.75px;top:119.15px;width:4.50px;height:4.50px;background:#555;border-radius:50%;"></div>
<div style="left:182.75px;top:127.95px;width:4.50px;height:4.50px;background:#555;border-radius:50%;"></div>
<div class="t" style="left:203.80px;top:109.60px;font-family:'Liberation Mono';font-size:27.5px;line-height:31px;color:#0000ff;-webkit-text-stroke:0.25px #0000ff;transform:scaleX(0.8727);transform-origin:0 0">396</div>
<div class="t" style="left:76.70px;top:141.60px;font-family:'Liberation Mono';font-size:27.5px;line-height:31px;color:#0a85a0;-webkit-text-stroke:0.25px #0a85a0;transform:scaleX(0.8727);transform-origin:0 0">csHost</div>
<div style="left:168.35px;top:151.15px;width:4.50px;height:4.50px;background:#555;border-radius:50%;"></div>
<div style="left:168.35px;top:159.95px;width:4.50px;height:4.50px;background:#555;border-radius:50%;"></div>
<div class="t" style="left:189.40px;top:141.60px;font-family:'Liberation Mono';font-size:27.5px;line-height:31px;color:#000;-webkit-text-stroke:0.25px #000;transform:scaleX(0.8727);transform-origin:0 0">d3a5r6fq3cin5s.cloudfront.net</div>
<div class="t" style="left:76.70px;top:173.60px;font-family:'Liberation Mono';font-size:27.5px;line-height:31px;color:#0a85a0;-webkit-text-stroke:0.25px #0a85a0;transform:scaleX(0.8727);transform-origin:0 0">csMethod</div>
<div style="left:197.15px;top:183.15px;width:4.50px;height:4.50px;background:#555;border-radius:50%;"></div>
<div style="left:197.15px;top:191.95px;width:4.50px;height:4.50px;background:#555;border-radius:50%;"></div>
<div class="t" style="left:218.20px;top:173.60px;font-family:'Liberation Mono';font-size:27.5px;line-height:31px;color:#000;-webkit-text-stroke:0.25px #000;transform:scaleX(0.8727);transform-origin:0 0">GET</div>
<div class="t" style="left:76.70px;top:205.60px;font-family:'Liberation Mono';font-size:27.5px;line-height:31px;color:#0a85a0;-webkit-text-stroke:0.25px #0a85a0;transform:scaleX(0.8727);transform-origin:0 0">csProtocol</div>
<div style="left:225.95px;top:215.15px;width:4.50px;height:4.50px;background:#555;border-radius:50%;"></div>
<div style="left:225.95px;top:223.95px;width:4.50px;height:4.50px;background:#555;border-radius:50%;"></div>
<div class="t" style="left:247.00px;top:205.60px;font-family:'Liberation Mono';font-size:27.5px;line-height:31px;color:#000;-webkit-text-stroke:0.25px #000;transform:scaleX(0.8727);transform-origin:0 0">http</div>
<div class="t" style="left:76.70px;top:237.60px;font-family:'Liberation Mono';font-size:27.5px;line-height:31px;color:#0a85a0;-webkit-text-stroke:0.25px #0a85a0;transform:scaleX(0.8727);transform-origin:0 0">csUriStem</div>
<div style="left:211.55px;top:247.15px;width:4.50px;height:4.50px;background:#555;border-radius:50%;"></div>
<div style="left:211.55px;top:255.95px;width:4.50px;height:4.50px;background:#555;border-radius:50%;"></div>
<div class="t" style="left:232.60px;top:237.60px;font-family:'Liberation Mono';font-size:27.5px;line-height:31px;color:#000;-webkit-text-stroke:0.25px #000;transform:scaleX(0.8727);transform-origin:0 0">/image.png</div>
<div class="t" style="left:76.70px;top:269.60px;font-family:'Liberation Mono';font-size:27.5px;line-height:31px;color:#0a85a0;-webkit-text-stroke:0.25px #0a85a0;transform:scaleX(0.8727);transform-origin:0 0">csUserAgent</div>
<div style="left:240.35px;top:279.15px;width:4.50px;height:4.50px;background:#555;border-radius:50%;"></div>
<div style="left:240.35px;top:287.95px;width:4.50px;height:4.50px;background:#555;border-radius:50%;"></div>
<div class="t" style="left:261.40px;top:269.60px;font-family:'Liberation Mono';font-size:27.5px;line-height:31px;color:#000;-webkit-text-stroke:0.25px #000;transform:scaleX(0.8727);transform-origin:0 0">Mozilla/5.0%2520(Windows%2520NT%252010.0;%2520WOW64)%2520AppleWebKit/537.36%2520(KHTML,%2520like%2520Gecko)%2520Chrome/4</div>
<div class="t" style="left:98.30px;top:301.60px;font-family:'Liberation Mono';font-size:27.5px;line-height:31px;color:#000;-webkit-text-stroke:0.25px #000;transform:scaleX(0.8727);transform-origin:0 0">9.0.2623.87%2520Safari/537.36</div>
<div class="t" style="left:76.70px;top:333.60px;font-family:'Liberation Mono';font-size:27.5px;line-height:31px;color:#0a85a0;-webkit-text-stroke:0.25px #0a85a0;transform:scaleX(0.8727);transform-origin:0 0">scBytes</div>
<div style="left:182.75px;top:343.15px;width:4.50px;height:4.50px;background:#555;border-radius:50%;"></div>
<div style="left:182.75px;top:351.95px;width:4.50px;height:4.50px;background:#555;border-radius:50%;"></div>
<div class="t" style="left:203.80px;top:333.60px;font-family:'Liberation Mono';font-size:27.5px;line-height:31px;color:#0000ff;-webkit-text-stroke:0.25px #0000ff;transform:scaleX(0.8727);transform-origin:0 0">623</div>
<div class="t" style="left:76.70px;top:365.60px;font-family:'Liberation Mono';font-size:27.5px;line-height:31px;color:#0a85a0;-webkit-text-stroke:0.25px #0a85a0;transform:scaleX(0.8727);transform-origin:0 0">scStatus</div>
<div style="left:197.15px;top:375.15px;width:4.50px;height:4.50px;background:#555;border-radius:50%;"></div>
<div style="left:197.15px;top:383.95px;width:4.50px;height:4.50px;background:#555;border-radius:50%;"></div>
<div class="t" style="left:218.20px;top:365.60px;font-family:'Liberation Mono';font-size:27.5px;line-height:31px;color:#000;-webkit-text-stroke:0.25px #000;transform:scaleX(0.8727);transform-origin:0 0">404</div>
<div class="t" style="left:76.70px;top:397.60px;font-family:'Liberation Mono';font-size:27.5px;line-height:31px;color:#0a85a0;-webkit-text-stroke:0.25px #0a85a0;transform:scaleX(0.8727);transform-origin:0 0">timeTaken</div>
<div style="left:211.55px;top:407.15px;width:4.50px;height:4.50px;background:#555;border-radius:50%;"></div>
<div style="left:211.55px;top:415.95px;width:4.50px;height:4.50px;background:#555;border-radius:50%;"></div>
<div class="t" style="left:232.60px;top:397.60px;font-family:'Liberation Mono';font-size:27.5px;line-height:31px;color:#0000ff;-webkit-text-stroke:0.25px #0000ff;transform:scaleX(0.8727);transform-origin:0 0">0.407</div>
<div class="t" style="left:76.70px;top:429.60px;font-family:'Liberation Mono';font-size:27.5px;line-height:31px;color:#0a85a0;-webkit-text-stroke:0.25px #0a85a0;transform:scaleX(0.8727);transform-origin:0 0">timestamp</div>
<div style="left:211.55px;top:439.15px;width:4.50px;height:4.50px;background:#555;border-radius:50%;"></div>
<div style="left:211.55px;top:447.95px;width:4.50px;height:4.50px;background:#555;border-radius:50%;"></div>
<div class="t" style="left:232.60px;top:429.60px;font-family:'Liberation Mono';font-size:27.5px;line-height:31px;color:#000;-webkit-text-stroke:0.25px #000;transform:scaleX(0.8727);transform-origin:0 0">2016-03-21 07:27:23</div>
<div class="t" style="left:76.70px;top:461.60px;font-family:'Liberation Mono';font-size:27.5px;line-height:31px;color:#0a85a0;-webkit-text-stroke:0.25px #0a85a0;transform:scaleX(0.8727);transform-origin:0 0">xEdgeLocation</div>
<div style="left:269.15px;top:471.15px;width:4.50px;height:4.50px;background:#555;border-radius:50%;"></div>
<div style="left:269.15px;top:479.95px;width:4.50px;height:4.50px;background:#555;border-radius:50%;"></div>
<div class="t" style="left:290.20px;top:461.60px;font-family:'Liberation Mono';font-size:27.5px;line-height:31px;color:#000;-webkit-text-stroke:0.25px #000;transform:scaleX(0.8727);transform-origin:0 0">MAA3</div>
<div class="t" style="left:76.70px;top:493.60px;font-family:'Liberation Mono';font-size:27.5px;line-height:31px;color:#0a85a0;-webkit-text-stroke:0.25px #0a85a0;transform:scaleX(0.8727);transform-origin:0 0">xEdgeRequestId</div>
<div style="left:283.55px;top:503.15px;width:4.50px;height:4.50px;background:#555;border-radius:50%;"></div>
<div style="left:283.55px;top:511.95px;width:4.50px;height:4.50px;background:#555;border-radius:50%;"></div>
<div class="t" style="left:304.60px;top:493.60px;font-family:'Liberation Mono';font-size:27.5px;line-height:31px;color:#000;-webkit-text-stroke:0.25px #000;transform:scaleX(0.8727);transform-origin:0 0">eiehPvx_e6htIzQjOfb4VRA4TiX6V-CVopVM15ridjSU5agMirwV_Q==</div>
<div class="t" style="left:76.70px;top:525.60px;font-family:'Liberation Mono';font-size:27.5px;line-height:31px;color:#0a85a0;-webkit-text-stroke:0.25px #0a85a0;transform:scaleX(0.8727);transform-origin:0 0">xEdgeResponseResultType</div>
<div style="left:413.15px;top:535.15px;width:4.50px;height:4.50px;background:#555;border-radius:50%;"></div>
<div style="left:413.15px;top:543.95px;width:4.50px;height:4.50px;background:#555;border-radius:50%;"></div>
<div class="t" style="left:434.20px;top:525.60px;font-family:'Liberation Mono';font-size:27.5px;line-height:31px;color:#000;-webkit-text-stroke:0.25px #000;transform:scaleX(0.8727);transform-origin:0 0">Error</div>
<div class="t" style="left:76.70px;top:557.60px;font-family:'Liberation Mono';font-size:27.5px;line-height:31px;color:#0a85a0;-webkit-text-stroke:0.25px #0a85a0;transform:scaleX(0.8727);transform-origin:0 0">xEdgeResultType</div>
<div style="left:297.95px;top:567.15px;width:4.50px;height:4.50px;background:#555;border-radius:50%;"></div>
<div style="left:297.95px;top:575.95px;width:4.50px;height:4.50px;background:#555;border-radius:50%;"></div>
<div class="t" style="left:319.00px;top:557.60px;font-family:'Liberation Mono';font-size:27.5px;line-height:31px;color:#000;-webkit-text-stroke:0.25px #000;transform:scaleX(0.8727);transform-origin:0 0">Error</div>
<div class="t" style="left:76.70px;top:589.60px;font-family:'Liberation Mono';font-size:27.5px;line-height:31px;color:#0a85a0;-webkit-text-stroke:0.25px #0a85a0;transform:scaleX(0.8727);transform-origin:0 0">xHostHeader</div>
<div style="left:240.35px;top:599.15px;width:4.50px;height:4.50px;background:#555;border-radius:50%;"></div>
<div style="left:240.35px;top:607.95px;width:4.50px;height:4.50px;background:#555;border-radius:50%;"></div>
<div class="t" style="left:261.40px;top:589.60px;font-family:'Liberation Mono';font-size:27.5px;line-height:31px;color:#000;-webkit-text-stroke:0.25px #000;transform:scaleX(0.8727);transform-origin:0 0">d3a5r6fq3cin5s.cloudfront.net</div>
<div style="left:10.00px;top:626.50px;width:18.00px;height:18.50px;background:#b2dfdb;border:2px solid #4a4a4a;border-radius:3.5px;"></div>
<div style="left:13.80px;top:634.70px;width:10.40px;height:1.80px;background:#4a4a4a;"></div>
<div class="t" style="left:46.50px;top:621.60px;font-family:'Liberation Mono';font-size:27.5px;line-height:31px;color:#0a85a0;-webkit-text-stroke:0.25px #0a85a0;transform:scaleX(0.8727);transform-origin:0 0">http</div>
<div style="left:109.35px;top:631.15px;width:4.50px;height:4.50px;background:#555;border-radius:50%;"></div>
<div style="left:109.35px;top:639.95px;width:4.50px;height:4.50px;background:#555;border-radius:50%;"></div>
<div class="t" style="left:76.70px;top:653.60px;font-family:'Liberation Mono';font-size:27.5px;line-height:31px;color:#0a85a0;-webkit-text-stroke:0.25px #0a85a0;transform:scaleX(0.8727);transform-origin:0 0">clientHost</div>
<div style="left:225.95px;top:663.15px;width:4.50px;height:4.50px;background:#555;border-radius:50%;"></div>
<div style="left:225.95px;top:671.95px;width:4.50px;height:4.50px;background:#555;border-radius:50%;"></div>
<div class="t" style="left:247.00px;top:653.60px;font-family:'Liberation Mono';font-size:27.5px;line-height:31px;color:#000;-webkit-text-stroke:0.25px #000;transform:scaleX(0.8727);transform-origin:0 0">50.112.190.168</div>
</div>
<div style="left:2828.00px;top:938.00px;width:30.00px;height:666.00px;background:#f3f3f3;"></div>
<svg style="position:absolute;left:2836px;top:946px;" width="24" height="44" viewBox="0 0 24 44"><polygon points="3,12.5 12,3 21,12.5" fill="#c4c4c4"/><polygon points="3,31 21,31 12,41" fill="#c4c4c4"/></svg>
<div style="left:2834.00px;top:1020.00px;width:24.00px;height:250.00px;background:#c9cdd5;"></div>
<div style="left:2858.00px;top:0.00px;width:1.50px;height:1616.00px;background:#8c8c8c;"></div>
<div style="left:2859.50px;top:0.00px;width:2.50px;height:1616.00px;background:#c0c0c0;"></div>
<div style="left:0.00px;top:0.00px;width:2.50px;height:1340.00px;background:#b8a888;"></div>
<div style="left:0.00px;top:1340.00px;width:2.50px;height:276.00px;background:#2e3139;"></div>
<div style="left:2.50px;top:10.00px;width:1.00px;height:1594.00px;background:#2a2e38;"></div>
<div style="left:2.50px;top:1604.00px;width:2855.50px;height:4.00px;background:#fdfdfd;border-radius:0 0 6px 6px;"></div>
<div style="left:0.00px;top:1608.00px;width:470.00px;height:8.00px;background:#2a2c32;"></div>
<div style="left:470.00px;top:1608.00px;width:170.00px;height:8.00px;background:#464646;border-radius:4px 0 0 0;"></div>
<div style="left:640.00px;top:1608.00px;width:1600.00px;height:8.00px;background:#747474;"></div>
<div style="left:2240.00px;top:1608.00px;width:622.00px;height:8.00px;background:#1e2026;"></div>
</body></html>
